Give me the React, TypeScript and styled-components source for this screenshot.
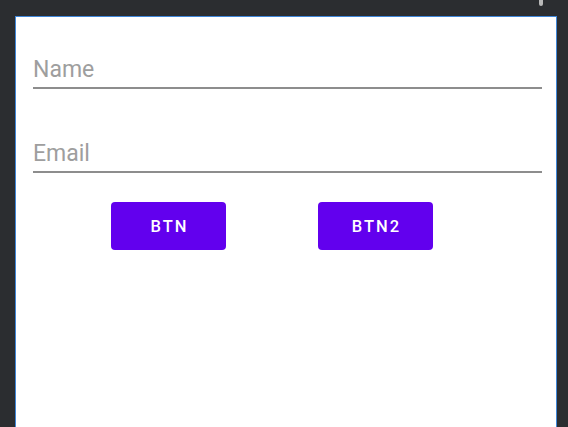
import styled, { createGlobalStyle } from 'styled-components';

const GlobalStyle = createGlobalStyle`
	html, body {
		margin: 0;
		height: 100%;
		background: #2b2d30;
	}
	#root {
		height: 100%;
	}
`;

export default function App() {
	return (
		<>
			<GlobalStyle />
			<Screen>
				<Handle />
				<Frame>
					<Field placeholder='Name' />
					<Field placeholder='Email' />
					<ButtonRow>
						<Button>BTN</Button>
						<Button>BTN2</Button>
					</ButtonRow>
				</Frame>
			</Screen>
		</>
	);
}

const Screen = styled.div`
	position: relative;
	display: flex;
	flex-direction: column;
	height: 100%;
	padding: 16px 11px 0 15px;
	box-sizing: border-box;
`;

const Handle = styled.span`
	position: absolute;
	top: 0;
	left: 539px;
	width: 4px;
	height: 6px;
	border-radius: 0 0 2px 2px;
	background: #b8b8b8;
`;

const Frame = styled.div`
	flex: 1;
	display: flex;
	flex-direction: column;
	background: #ffffff;
	border: 1px solid #3f86d8;
	border-bottom: none;
	padding: 38px 14px 0 17px;
	font-family: Roboto, 'Noto Sans', sans-serif;
`;

const Field = styled.input`
	display: block;
	width: 100%;
	box-sizing: border-box;
	border: none;
	border-bottom: 2px solid #8d8d8d;
	outline: none;
	background: transparent;
	padding: 2px 0 4px 0;
	margin: 0 0 50px;
	font-family: inherit;
	font-size: 23px;
	line-height: 26px;
	color: #222;

	&::placeholder {
		color: #9e9e9e;
	}

	& + & {
		margin-bottom: 29px;
	}
`;

const ButtonRow = styled.div`
	display: flex;
	gap: 92px;
	padding-left: 78px;
`;

const Button = styled.button`
	width: 115px;
	height: 48px;
	border: none;
	border-radius: 4px;
	background: #6200ee;
	color: #ffffff;
	font-family: inherit;
	font-weight: 500;
	font-size: 16.5px;
	letter-spacing: 2px;
	padding: 0 0 0 2px;
	cursor: pointer;
`;
